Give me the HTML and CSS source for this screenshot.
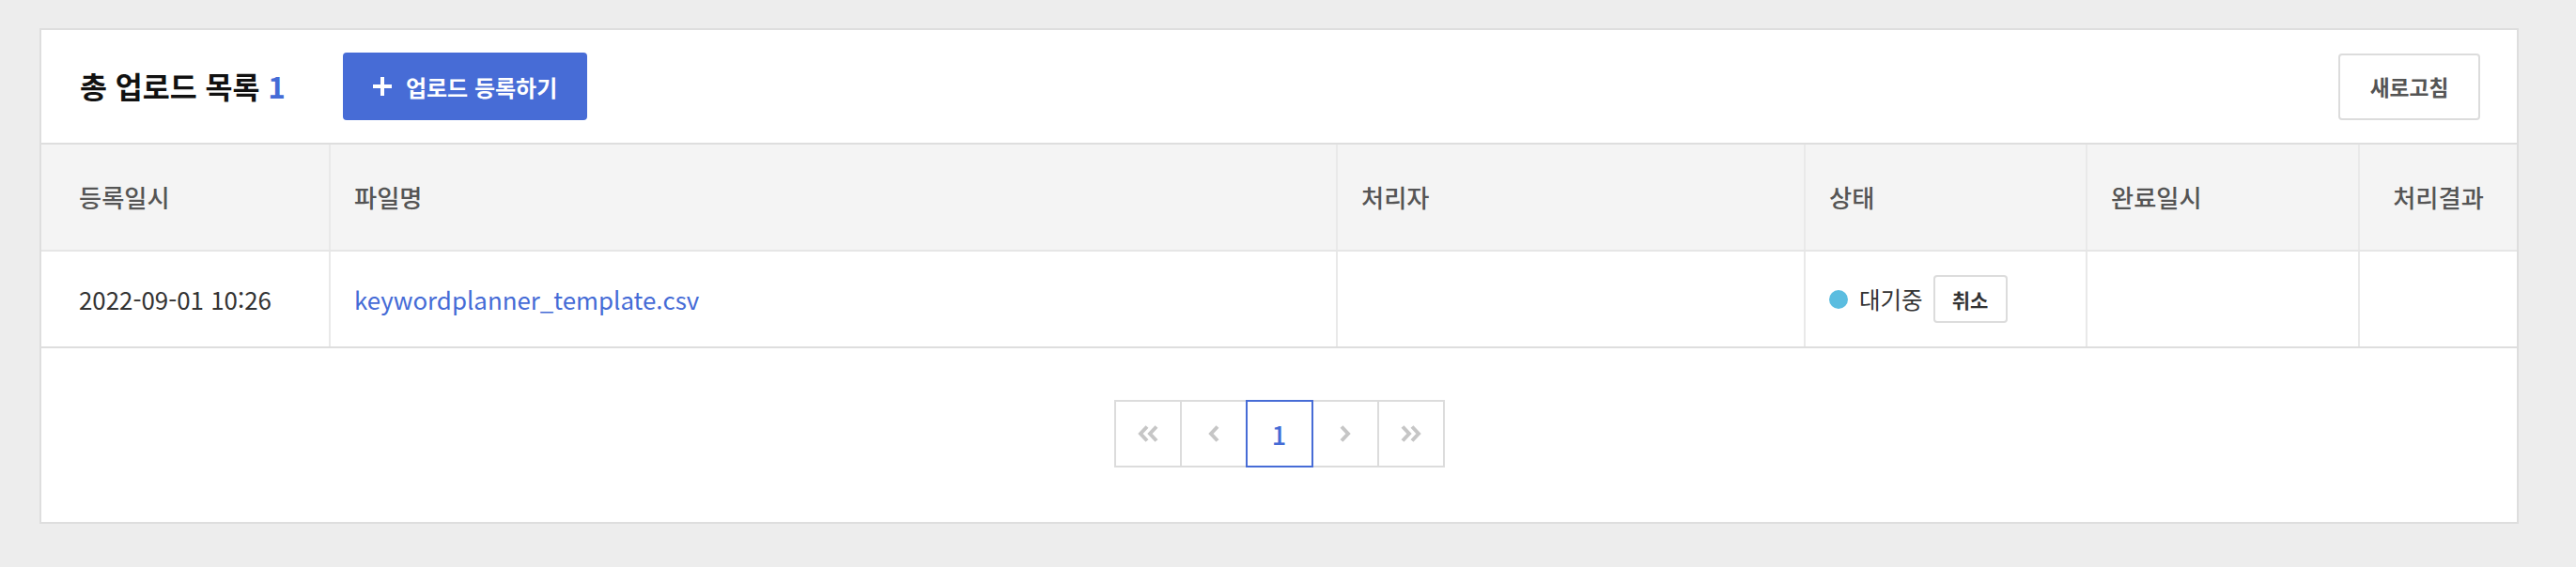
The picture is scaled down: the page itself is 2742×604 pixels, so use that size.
FILE: index.html
```html
<!DOCTYPE html>
<html lang="ko">
<head>
<meta charset="utf-8">
<title>업로드 목록</title>
<link rel="stylesheet" href="styles.css">
</head>
<body>
<section class="card">
  <header class="card-head">
    <h1 class="title">총 업로드 목록 <span class="count">1</span></h1>
    <button class="btn-primary" type="button">
      <svg class="plus" width="20" height="20" viewBox="0 0 20 20" aria-hidden="true"><path d="M10 0V20M0 10H20" stroke="#fff" stroke-width="4"/></svg>
      <span>업로드 등록하기</span>
    </button>
    <button class="btn-refresh" type="button">새로고침</button>
  </header>

  <div class="grid">
    <div class="row head">
      <div class="cell first">등록일시</div>
      <div class="cell">파일명</div>
      <div class="cell">처리자</div>
      <div class="cell">상태</div>
      <div class="cell">완료일시</div>
      <div class="cell last">처리결과</div>
    </div>
    <div class="row body">
      <div class="cell first">2022-09-01 10:26</div>
      <div class="cell"><a class="file" href="#">keywordplanner_template.csv</a></div>
      <div class="cell"></div>
      <div class="cell status">
        <span class="dot"></span>
        <span class="status-text">대기중</span>
        <button class="btn-cancel" type="button">취소</button>
      </div>
      <div class="cell"></div>
      <div class="cell last"></div>
    </div>
  </div>

  <nav class="pager">
    <span class="page">
      <svg width="24" height="18" viewBox="0 0 24 18" aria-hidden="true"><path d="M11 1.5L4 9L11 16.5M21 1.5L14 9L21 16.5" fill="none" stroke="#c6c6c6" stroke-width="4"/></svg>
    </span>
    <span class="page">
      <svg width="12" height="18" viewBox="0 0 12 18" aria-hidden="true"><path d="M10 1.5L3 9L10 16.5" fill="none" stroke="#c6c6c6" stroke-width="4"/></svg>
    </span>
    <span class="page active">1</span>
    <span class="page">
      <svg width="12" height="18" viewBox="0 0 12 18" aria-hidden="true"><path d="M2 1.5L9 9L2 16.5" fill="none" stroke="#c6c6c6" stroke-width="4"/></svg>
    </span>
    <span class="page">
      <svg width="24" height="18" viewBox="0 0 24 18" aria-hidden="true"><path d="M3 1.5L10 9L3 16.5M13 1.5L20 9L13 16.5" fill="none" stroke="#c6c6c6" stroke-width="4"/></svg>
    </span>
  </nav>
</section>
</body>
</html>
```
FILE: styles.css
```css
* { box-sizing: border-box; }

html, body {
  margin: 0;
  background: #ededed;
}

body {
  padding: 30px 61px 46px 42px;
  font-family: "Noto Sans CJK KR", "Noto Sans", "Liberation Sans", sans-serif;
  color: #333;
}

.card {
  background: #fff;
  border: 2px solid #dedede;
}

.card-head {
  display: flex;
  align-items: center;
  height: 122px;
  padding: 0 39px 0 41px;
  border-bottom: 2px solid #dedede;
}

.title {
  margin: 0;
  font-size: 31.5px;
  font-weight: 700;
  line-height: 1;
  color: #111;
}

.count { color: #456bd6; }

.btn-primary {
  display: flex;
  align-items: center;
  gap: 15px;
  margin-left: 61px;
  width: 260px;
  height: 72px;
  padding: 0 0 0 32px;
  border: 0;
  border-radius: 4px;
  background: #476cd6;
  color: #fff;
  font-family: inherit;
  font-size: 24px;
  font-weight: 700;
}

.btn-refresh {
  margin-left: auto;
  width: 151px;
  height: 71px;
  border: 2px solid #dcdcdc;
  border-radius: 4px;
  background: #fff;
  color: #555;
  font-family: inherit;
  font-size: 22.75px;
  font-weight: 700;
}

.row {
  display: grid;
  grid-template-columns: 306px 1072px 498px 300px 290px 1fr;
}

.row.head {
  height: 114px;
  background: #f4f4f4;
  border-bottom: 2px solid #e6e6e6;
}

.row.body {
  height: 103px;
  border-bottom: 2px solid #dedede;
}

.cell {
  display: flex;
  align-items: center;
  padding: 0 25px;
  border-left: 2px solid #e9e9e9;
  min-width: 0;
}

.cell.first {
  border-left: 0;
  padding-left: 40px;
}

.cell.last { justify-content: center; }

.head .cell {
  font-size: 26.25px;
  font-weight: 500;
  color: #555;
}

.body .cell {
  font-size: 25.9px;
  color: #333;
}

.file {
  color: #456bd6;
  text-decoration: none;
}

.dot {
  width: 20px;
  height: 20px;
  border-radius: 50%;
  background: #5bbde0;
  margin-right: 12px;
}

.body .status-text {
  font-size: 24.5px;
  color: #333;
}

.btn-cancel {
  margin-left: 11px;
  width: 79px;
  height: 51px;
  border: 2px solid #dcdcdc;
  border-radius: 4px;
  background: #fff;
  color: #333;
  font-family: inherit;
  font-size: 21px;
  font-weight: 700;
}

.pager {
  display: flex;
  justify-content: center;
  padding: 55px 0 58px;
}

.page {
  display: flex;
  align-items: center;
  justify-content: center;
  width: 72px;
  height: 72px;
  border: 2px solid #dcdcdc;
  background: #fff;
  font-size: 27px;
  font-weight: 500;
  color: #456bd6;
}

.page + .page { margin-left: -2px; }

.page.active {
  position: relative;
  z-index: 1;
  border-color: #476cd6;
}
```
